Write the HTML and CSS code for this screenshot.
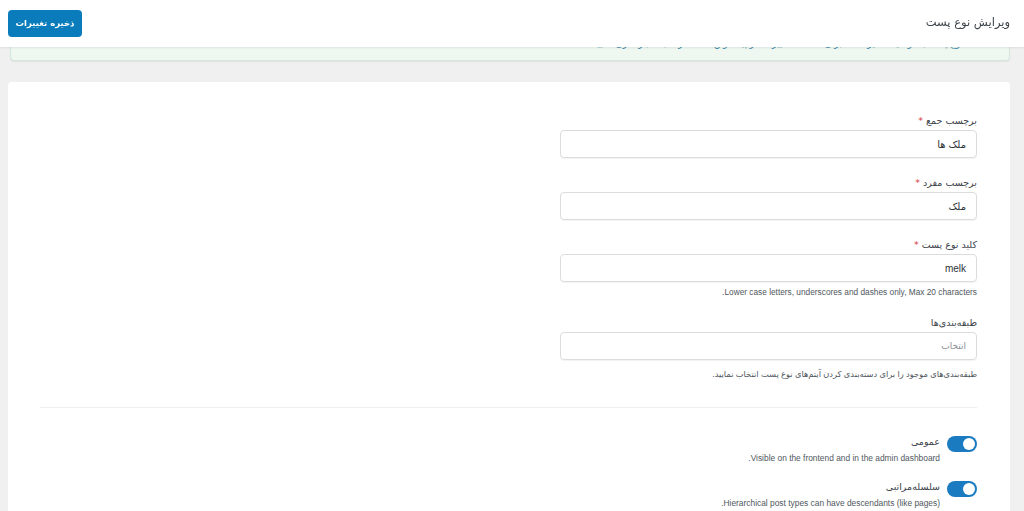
FILE: index.html
```html
<!DOCTYPE html>
<html lang="fa" dir="rtl">
<head>
<meta charset="utf-8">
<link rel="stylesheet" href="styles.css">
</head>
<body>
<header class="topbar">
  <h1 class="title">ویرایش نوع پست</h1>
  <button class="save-btn">ذخیره تغییرات</button>
</header>
<main class="page">
  <div class="notice">نوع پست با موفقیت ذخیره شد. برای مشاهده تغییرات در پیشخوان، صفحه را مجدداً بارگذاری نمایید.</div>
  <section class="card">
    <div class="form-col">
      <div class="field">
        <label class="label">برچسب جمع <span class="req">*</span></label>
        <div class="input">ملک ها</div>
      </div>
      <div class="field">
        <label class="label">برچسب مفرد <span class="req">*</span></label>
        <div class="input">ملک</div>
      </div>
      <div class="field">
        <label class="label">کلید نوع پست <span class="req">*</span></label>
        <div class="input">melk</div>
        <p class="help">Lower case letters, underscores and dashes only, Max 20 characters.</p>
      </div>
      <div class="field">
        <label class="label">طبقه‌بندی‌ها</label>
        <div class="input placeholder">انتخاب</div>
        <p class="help help-fa">طبقه‌بندی‌های موجود را برای دسته‌بندی کردن آیتم‌های نوع پست انتخاب نمایید.</p>
      </div>
    </div>
    <hr class="divider">
    <div class="toggle-row">
      <span class="switch"><span class="knob"></span></span>
      <div class="toggle-text">
        <div class="toggle-label">عمومی</div>
        <div class="toggle-desc">Visible on the frontend and in the admin dashboard.</div>
      </div>
    </div>
    <div class="toggle-row">
      <span class="switch"><span class="knob"></span></span>
      <div class="toggle-text">
        <div class="toggle-label">سلسله‌مراتبی</div>
        <div class="toggle-desc">Hierarchical post types can have descendants (like pages).</div>
      </div>
    </div>
  </section>
</main>
</body>
</html>
```
FILE: styles.css
```css
* { box-sizing: border-box; }
html, body { margin: 0; padding: 0; }
body {
  background: #f0f0f1;
  font-family: Tahoma, "DejaVu Sans", "Liberation Sans", sans-serif;
  color: #3c434a;
  height: 511px;
  overflow: hidden;
}
.topbar {
  position: fixed;
  top: 0; left: 0; right: 0;
  height: 47px;
  background: #fff;
  box-shadow: 0 1px 2px rgba(0,0,0,0.08);
  display: flex;
  align-items: center;
  justify-content: space-between;
  padding: 0 14px 0 8px;
  z-index: 5;
}
.title {
  margin: 0;
  font-size: 11.5px;
  font-weight: normal;
  color: #3c434a;
  padding-bottom: 4px;
}
.save-btn {
  font-family: inherit;
  width: 74px;
  height: 27px;
  background: #0a7cbb;
  color: #fff;
  border: none;
  border-radius: 4px;
  font-size: 8.5px;
  font-weight: bold;
  padding: 0;
  margin-top: -1px;
}
.page {
  padding: 21px 14px 0 8px;
}
.notice {
  height: 40px;
  margin-left: 2px;
  background: #eef8f1;
  border: 1px solid #d5e6da;
  border-radius: 0 0 4px 4px;
  box-shadow: 0 1px 1px rgba(0,0,0,0.06);
  color: #2e7fa6;
  font-size: 9px;
  line-height: 11px;
  padding: 17px 46px 0 0;
  white-space: nowrap;
  overflow: hidden;
}
.card {
  margin-top: 21px;
  background: #fff;
  border-radius: 4px;
  padding: 33px 33px 20px 32px;
}
.form-col {
  width: 417px;
}
.field { margin-bottom: 19px; }
.label {
  display: flex;
  gap: 3px;
  height: 11px;
  align-items: center;
  font-size: 9.5px;
  color: #3c434a;
  line-height: 11px;
  margin-bottom: 4px;
}
.req { color: #d63638; }
.input {
  height: 28px;
  border: 1px solid #dcdcde;
  border-radius: 4px;
  box-shadow: 0 1px 1px rgba(0,0,0,0.05);
  font-size: 10px;
  color: #2c3338;
  display: flex;
  align-items: center;
  padding: 0 10px;
  font-family: "Liberation Sans", "DejaVu Sans", sans-serif;
}
.input.placeholder { color: #8c8f94; font-size: 9px; }
.help {
  margin: 5px 0 0;
  height: 11px;
  font-size: 8.3px;
  line-height: 11px;
  color: #50575e;
  font-family: "Liberation Sans", "DejaVu Sans", sans-serif;
}
.help-fa { margin-top: 9px; }
.divider {
  border: none;
  border-top: 1px solid #f0f0f1;
  margin: 27px 0 28px;
}
.toggle-row {
  display: flex;
  align-items: flex-start;
  gap: 7px;
  margin-bottom: 17px;
}
.switch {
  width: 30px;
  height: 16px;
  border-radius: 8px;
  background: #1a7bc0;
  position: relative;
  flex: none;
}
.knob {
  position: absolute;
  top: 2px;
  right: 2px;
  width: 12px;
  height: 12px;
  border-radius: 50%;
  background: #fff;
}
.toggle-label {
  font-size: 9.5px;
  line-height: 11px;
  height: 11px;
  color: #3c434a;
}
.toggle-desc {
  margin-top: 6px;
  font-size: 8.4px;
  line-height: 11px;
  height: 11px;
  color: #50575e;
  font-family: "Liberation Sans", "DejaVu Sans", sans-serif;
}
```
